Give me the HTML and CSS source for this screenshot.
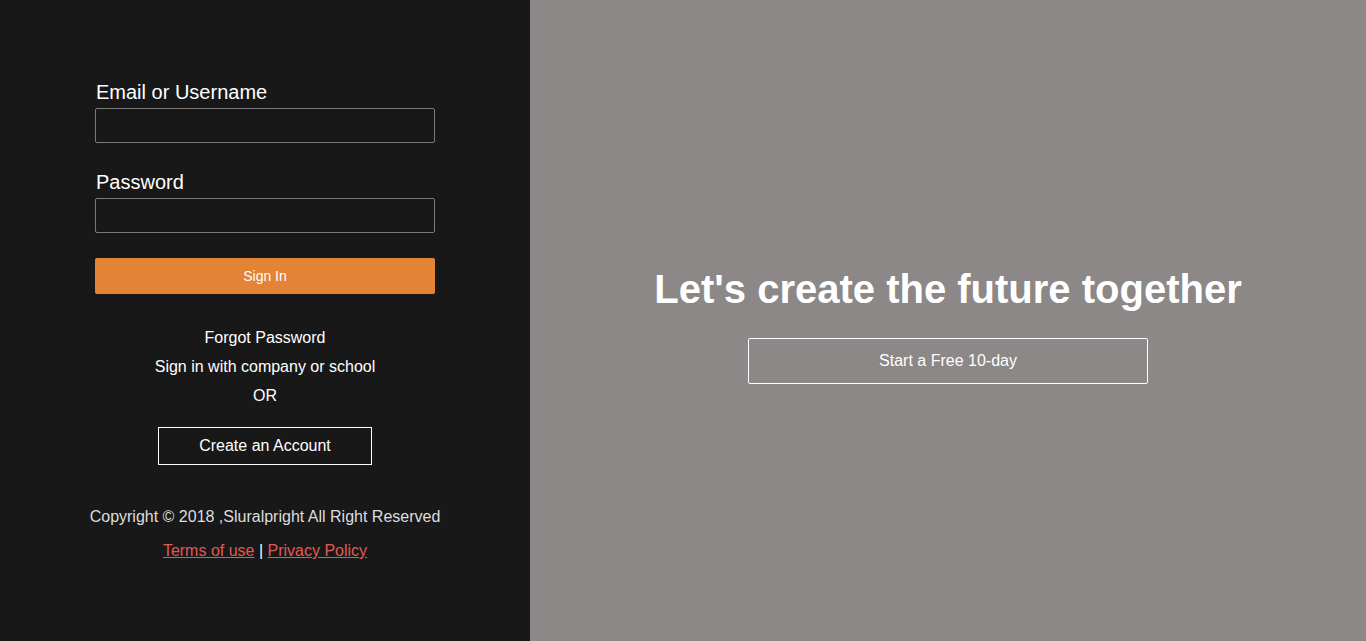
FILE: index.html
```html
<!DOCTYPE html>
<html lang="en">
<head>
<meta charset="utf-8">
<title>Sign In</title>
<link rel="stylesheet" href="styles.css">
</head>
<body>
<div class="page">
  <section class="left">
    <form class="form">
      <label class="label" for="user">Email or Username</label>
      <input class="input" id="user" type="text">
      <label class="label label-second" for="pass">Password</label>
      <input class="input" id="pass" type="password">
      <button type="button" class="signin">Sign In</button>
      <div class="links">
        <div class="line">Forgot Password</div>
        <div class="line">Sign in with company or school</div>
        <div class="line">OR</div>
      </div>
      <div class="create-wrap"><button type="button" class="create">Create an Account</button></div>
      <p class="copy">Copyright © 2018 ,Sluralpright All Right Reserved</p>
      <p class="legal"><a href="#">Terms of use</a> | <a href="#">Privacy Policy</a></p>
    </form>
  </section>
  <section class="right">
    <h1 class="headline">Let's create the future together</h1>
    <button type="button" class="trial">Start a Free 10-day</button>
  </section>
</div>
</body>
</html>
```
FILE: styles.css
```css
* { box-sizing: border-box; }
html, body { margin: 0; padding: 0; height: 100%; }
body {
  font-family: "Liberation Sans", Arial, sans-serif;
  color: #fff;
}
.page {
  display: flex;
  height: 641px;
}
.left {
  width: 530px;
  flex: 0 0 530px;
  background: #181818;
  display: flex;
  justify-content: center;
  padding-top: 81px;
}
.form {
  width: 340px;
  display: flex;
  flex-direction: column;
}
.label {
  font-size: 20px;
  line-height: 23px;
  color: #fff;
  margin-bottom: 4px;
  padding-left: 1px;
}
.label-second { margin-top: 28px; }
.input {
  height: 35px;
  background: #181818;
  border: 1px solid #7a7a7a;
  border-radius: 2px;
  color: #fff;
  font-size: 16px;
  padding: 0 8px;
}
.signin {
  margin-top: 25px;
  height: 36px;
  background: #e38336;
  border: none;
  border-radius: 2px;
  color: #fff;
  font-family: "Liberation Sans", Arial, sans-serif;
  font-size: 14px;
}
.links {
  margin-top: 29px;
  text-align: center;
}
.line {
  font-size: 16px;
  line-height: 29px;
}
.create-wrap {
  display: flex;
  justify-content: center;
  margin-top: 17px;
}
.create {
  width: 214px;
  height: 38px;
  background: transparent;
  border: 1px solid #fff;
  color: #fff;
  font-family: "Liberation Sans", Arial, sans-serif;
  font-size: 16px;
}
.copy {
  margin: 43px -30px 0;
  text-align: center;
  font-size: 16px;
  line-height: 18px;
  color: #ddd;
}
.legal {
  margin: 16px 0 0;
  text-align: center;
  font-size: 16px;
  line-height: 18px;
  color: #fff;
}
.legal a { color: #e05a55; }
.right {
  flex: 1;
  background: #8c8887;
  display: flex;
  flex-direction: column;
  align-items: center;
  justify-content: center;
  padding-top: 8px;
}
.headline {
  margin: 0;
  font-size: 40px;
  line-height: 46px;
  font-weight: bold;
  color: #fff;
}
.trial {
  margin-top: 26px;
  width: 400px;
  height: 46px;
  background: transparent;
  border: 1px solid #fff;
  border-radius: 2px;
  color: #fff;
  font-family: "Liberation Sans", Arial, sans-serif;
  font-size: 16px;
}
```
